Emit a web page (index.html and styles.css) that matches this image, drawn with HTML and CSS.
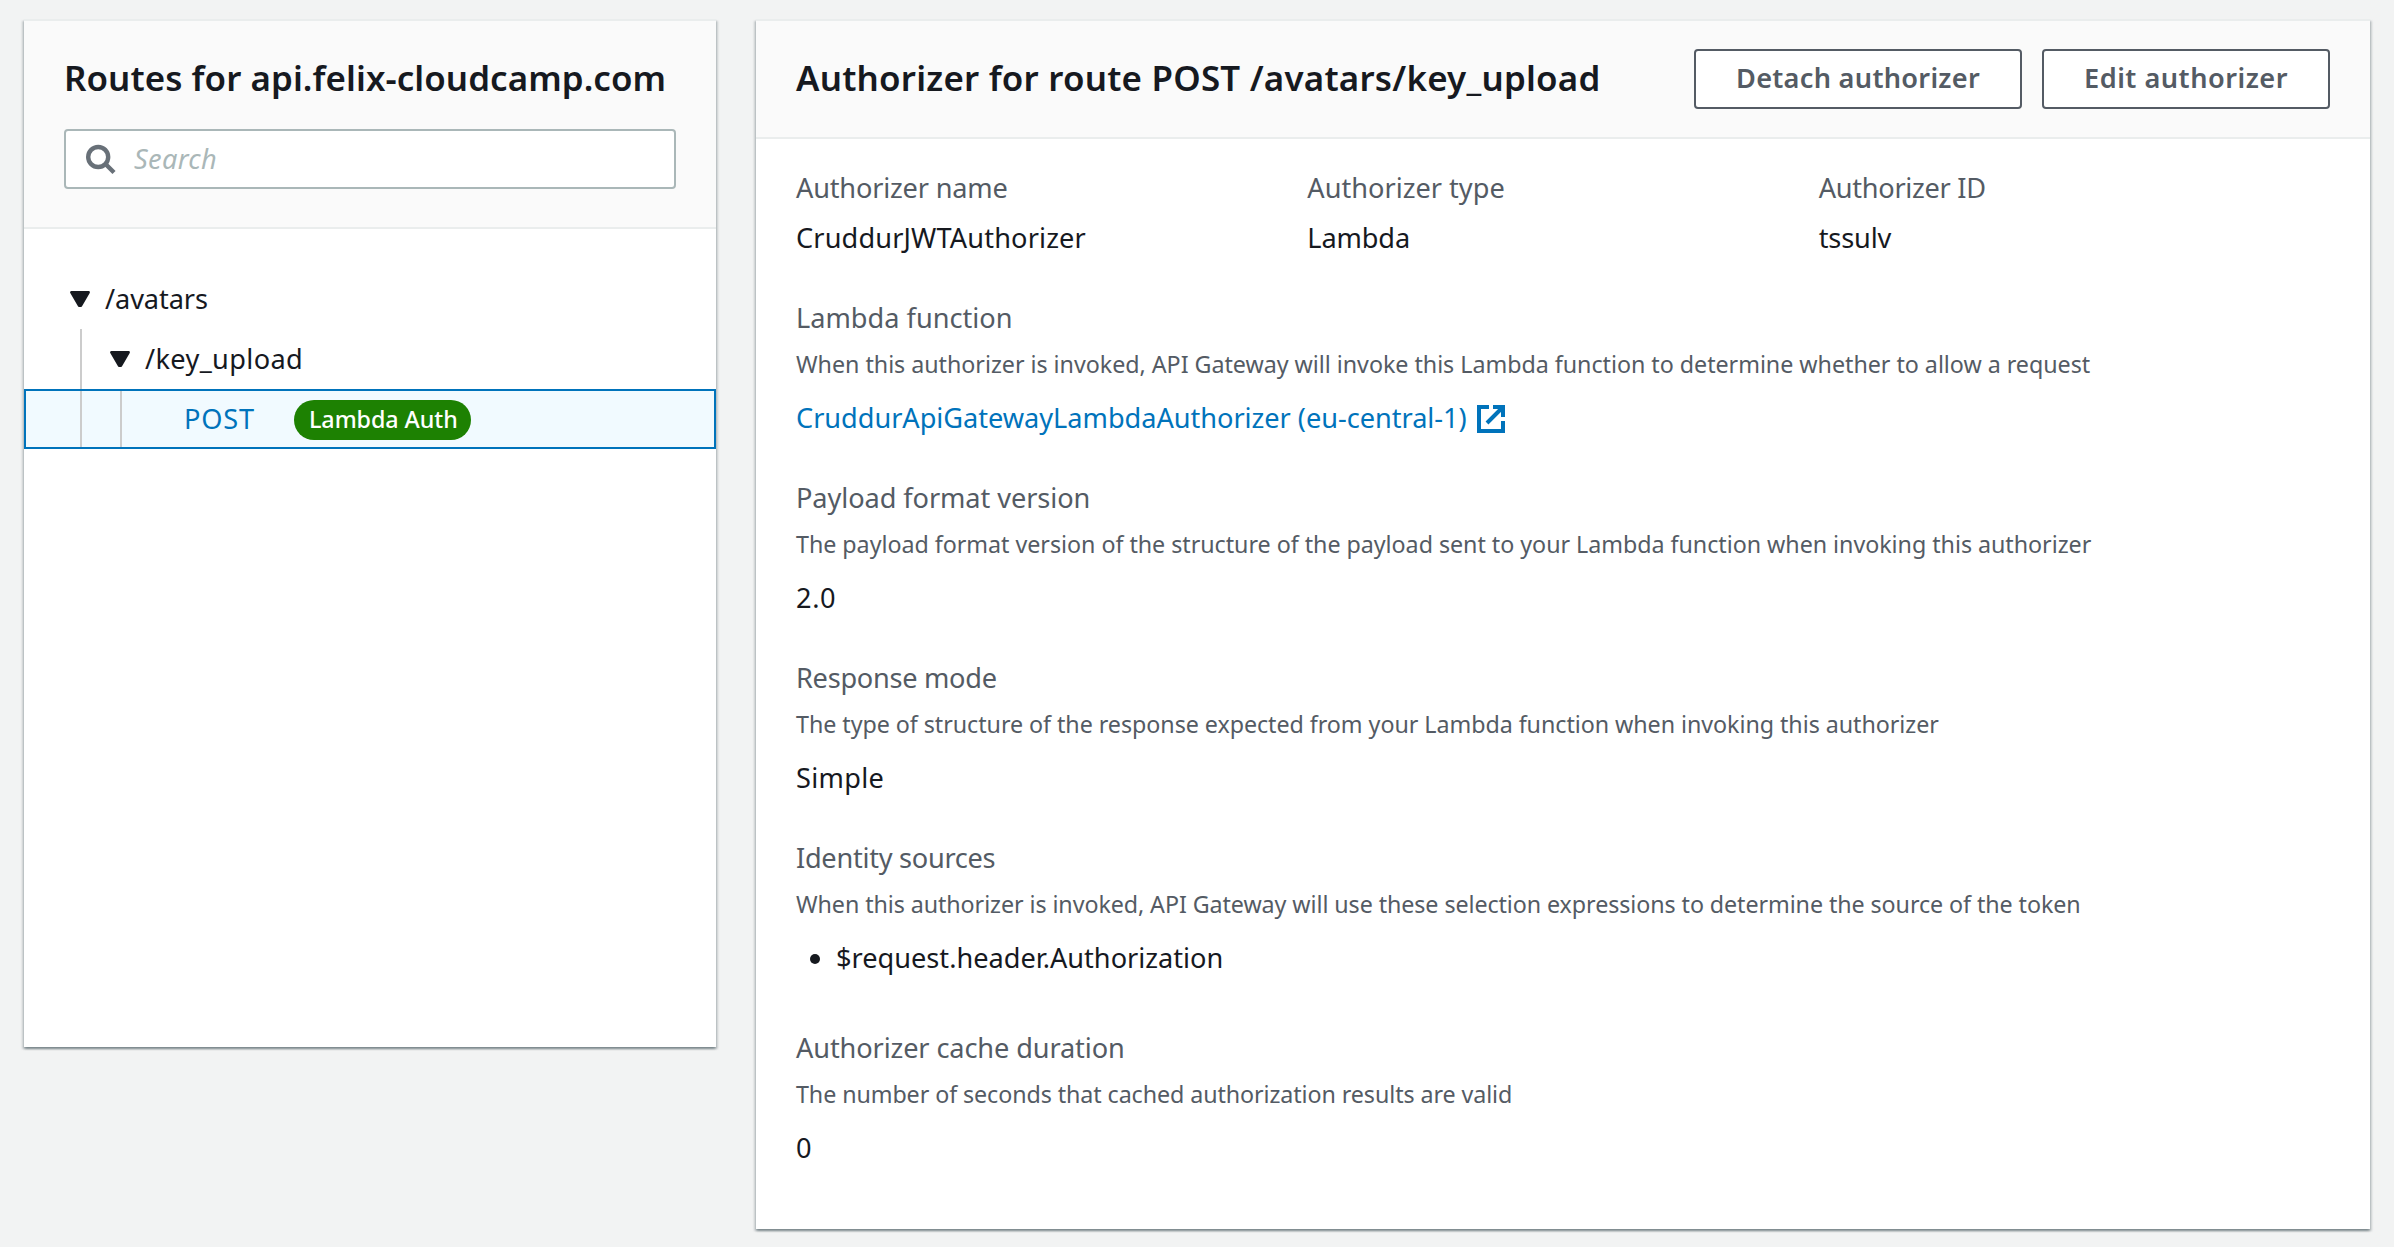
FILE: index.html
```html
<!DOCTYPE html>
<html lang="en">
<head>
<meta charset="utf-8">
<title>Authorization</title>
<link rel="stylesheet" href="styles.css">
</head>
<body>
<main class="page">
  <section class="panel routes">
    <header class="panel-header routes-header">
      <h2 class="title title-routes">Routes for api.felix-cloudcamp.com</h2>
      <div class="search">
        <svg class="search-icon" viewBox="0 0 32 32"><circle cx="12.2" cy="14" r="10"/><path d="M19 20.5 28 29.5"/></svg>
        <span class="placeholder">Search</span>
      </div>
    </header>
    <div class="tree">
      <div class="row row-root">
        <svg class="caret" viewBox="0 0 20 16"><path d="M1.3 1.3H18.7L11 14.7H9Z"/></svg>
        <span class="t-avatars">/avatars</span>
      </div>
      <div class="row row-child">
        <i class="guide"></i>
        <svg class="caret" viewBox="0 0 20 16"><path d="M1.3 1.3H18.7L11 14.7H9Z"/></svg>
        <span class="t-key">/key_upload</span>
      </div>
      <div class="row row-selected">
        <i class="guide"></i>
        <i class="guide guide-inner"></i>
        <a class="method">POST</a>
        <span class="badge">Lambda Auth</span>
      </div>
    </div>
  </section>

  <section class="panel details">
    <header class="panel-header details-header">
      <h2 class="title title-details">Authorizer for route POST /avatars/key_upload</h2>
      <div class="actions">
        <button class="button button-detach">Detach authorizer</button>
        <button class="button button-edit">Edit authorizer</button>
      </div>
    </header>
    <div class="fields">
      <div class="columns">
        <div class="field">
          <div class="label t-name">Authorizer name</div>
          <div class="value t-jwt">CruddurJWTAuthorizer</div>
        </div>
        <div class="field">
          <div class="label">Authorizer type</div>
          <div class="value t-lambda">Lambda</div>
        </div>
        <div class="field">
          <div class="label t-id">Authorizer ID</div>
          <div class="value t-lambda">tssulv</div>
        </div>
      </div>
      <div class="field">
        <div class="label">Lambda function</div>
        <div class="hint">When this authorizer is invoked, API Gateway will invoke this Lambda function to determine whether to allow a request</div>
        <a class="value link">CruddurApiGatewayLambdaAuthorizer (eu-central-1)
          <svg class="external" viewBox="0 0 28 28"><path d="M12 2H2V26H26V16M16 2H26V12M25 3 10 18"/></svg></a>
      </div>
      <div class="field">
        <div class="label t-payload">Payload format version</div>
        <div class="hint hint-payload">The payload format version of the structure of the payload sent to your Lambda function when invoking this authorizer</div>
        <div class="value t-version">2.0</div>
      </div>
      <div class="field">
        <div class="label t-mode">Response mode</div>
        <div class="hint hint-mode">The type of structure of the response expected from your Lambda function when invoking this authorizer</div>
        <div class="value t-simple">Simple</div>
      </div>
      <div class="field">
        <div class="label t-mode">Identity sources</div>
        <div class="hint hint-identity">When this authorizer is invoked, API Gateway will use these selection expressions to determine the source of the token</div>
        <ul class="value sources"><li>$request.header.Authorization</li></ul>
      </div>
      <div class="field">
        <div class="label t-cache">Authorizer cache duration</div>
        <div class="hint hint-cache">The number of seconds that cached authorization results are valid</div>
        <div class="value">0</div>
      </div>
    </div>
  </section>
</main>
</body>
</html>
```
FILE: styles.css
```css
* { box-sizing: border-box; }
body {
  margin: 0;
  background: #f2f3f3;
  color: #16191f;
  font: 27.16px/44px "Noto Sans", "Open Sans", sans-serif;
}
.page {
  display: flex;
  align-items: flex-start;
  gap: 40px;
  height: 1247px;
  padding: 19px 24px 0;
  white-space: nowrap;
}
.panel {
  background: #fff;
  border-top: 2px solid #eaeded;
  box-shadow: 0 2px 2px 0 rgba(0, 28, 36, .3), 2px 2px 2px 0 rgba(0, 28, 36, .15), -2px 2px 2px 0 rgba(0, 28, 36, .15);
}
.routes { width: 692px; height: 1028px; }
.details { width: 1614px; height: 1210px; }
.panel-header { background: #fafafa; border-bottom: 2px solid #eaeded; }
.routes-header { padding: 28px 40px 38px; }
.details-header { display: flex; justify-content: space-between; height: 118px; padding: 28px 40px; }
.title { margin: 0; font-size: 34.92px; font-weight: 600; line-height: 57px; }
.title-routes { letter-spacing: .06px; }
.title-details { letter-spacing: .22px; }

.search {
  display: flex;
  align-items: center;
  height: 60px;
  margin-top: 23px;
  padding-left: 20px;
  background: #fff;
  border: 2px solid #aab7b8;
  border-radius: 4px;
}
.search-icon { width: 32px; height: 32px; fill: none; stroke: #687078; stroke-width: 4.4; }
.placeholder { margin-left: 16px; color: #aab7b8; font-style: italic; letter-spacing: .35px; }

.tree { padding-top: 40px; }
.row { display: flex; align-items: center; height: 60px; padding-bottom: 1px; }
.row-root { padding-left: 46px; }
.row-child { padding: 0 0 0 56px; }
.row-selected { padding: 0 0 0 54px; background: #f1faff; border: 2px solid #0073bb; }
.guide { align-self: stretch; width: 2px; background: #ccc; }
.guide-inner { margin-left: 38px; }
.caret { width: 20px; height: 16px; fill: #16191f; stroke: #16191f; stroke-width: 2.4; stroke-linejoin: round; }
.row-root .caret { margin-top: 1px; }
.row-child .caret { margin-left: 28px; }
.t-avatars { margin-left: 15px; letter-spacing: -.09px; }
.t-key { margin-left: 15px; padding-bottom: 1px; letter-spacing: .36px; }
.method { width: 110px; margin-left: 62px; padding-bottom: 1px; color: #0073bb; letter-spacing: .8px; }
.badge {
  height: 40px;
  padding: 0 13px 0 15px;
  margin-top: 2px;
  border-radius: 20px;
  background: #1d8102;
  color: #fff;
  font-size: 23.28px;
  font-weight: 500;
  line-height: 39px;
  letter-spacing: -.05px;
}

.actions { display: flex; gap: 20px; }
.button {
  height: 60px;
  padding: 0 0 2px;
  background: #fff;
  border: 2px solid #545b64;
  border-radius: 4px;
  color: #545b64;
  font: 600 27.16px/44px "Noto Sans", "Open Sans", sans-serif;
}
.button-detach { width: 328px; letter-spacing: .28px; }
.button-edit { width: 288px; letter-spacing: .5px; }

.fields { display: flex; flex-direction: column; gap: 36px; padding: 27px 40px 59px; }
.columns { display: grid; grid-template-columns: repeat(3, 1fr); }
.label { color: #545b64; }
.columns .value { margin-top: 6px; }
.hint { margin-top: 6px; color: #545b64; font-size: 23.28px; line-height: 36px; letter-spacing: -.03px; }
.hint + .value { margin-top: 14px; }
.hint-payload { letter-spacing: -.035px; }
.hint-mode { letter-spacing: -.05px; }
.hint-identity { letter-spacing: -.08px; }
.hint-cache { letter-spacing: -.086px; }
.link { display: flex; align-items: center; color: #0073bb; letter-spacing: -.03px; }
.external { width: 28px; height: 28px; margin-left: 10px; margin-bottom: -2px; fill: none; stroke: #0073bb; stroke-width: 4; }
.hint + .sources { margin: 14px 0 10px; padding: 0 0 0 40px; }
.t-name { letter-spacing: -.19px; }
.t-jwt { letter-spacing: .14px; }
.t-lambda { letter-spacing: -.14px; }
.t-id { letter-spacing: -.28px; }
.t-payload { letter-spacing: -.08px; }
.t-version { letter-spacing: .6px; }
.t-mode { letter-spacing: -.28px; }
.t-simple { letter-spacing: .3px; }
.t-cache { letter-spacing: -.12px; }
```
